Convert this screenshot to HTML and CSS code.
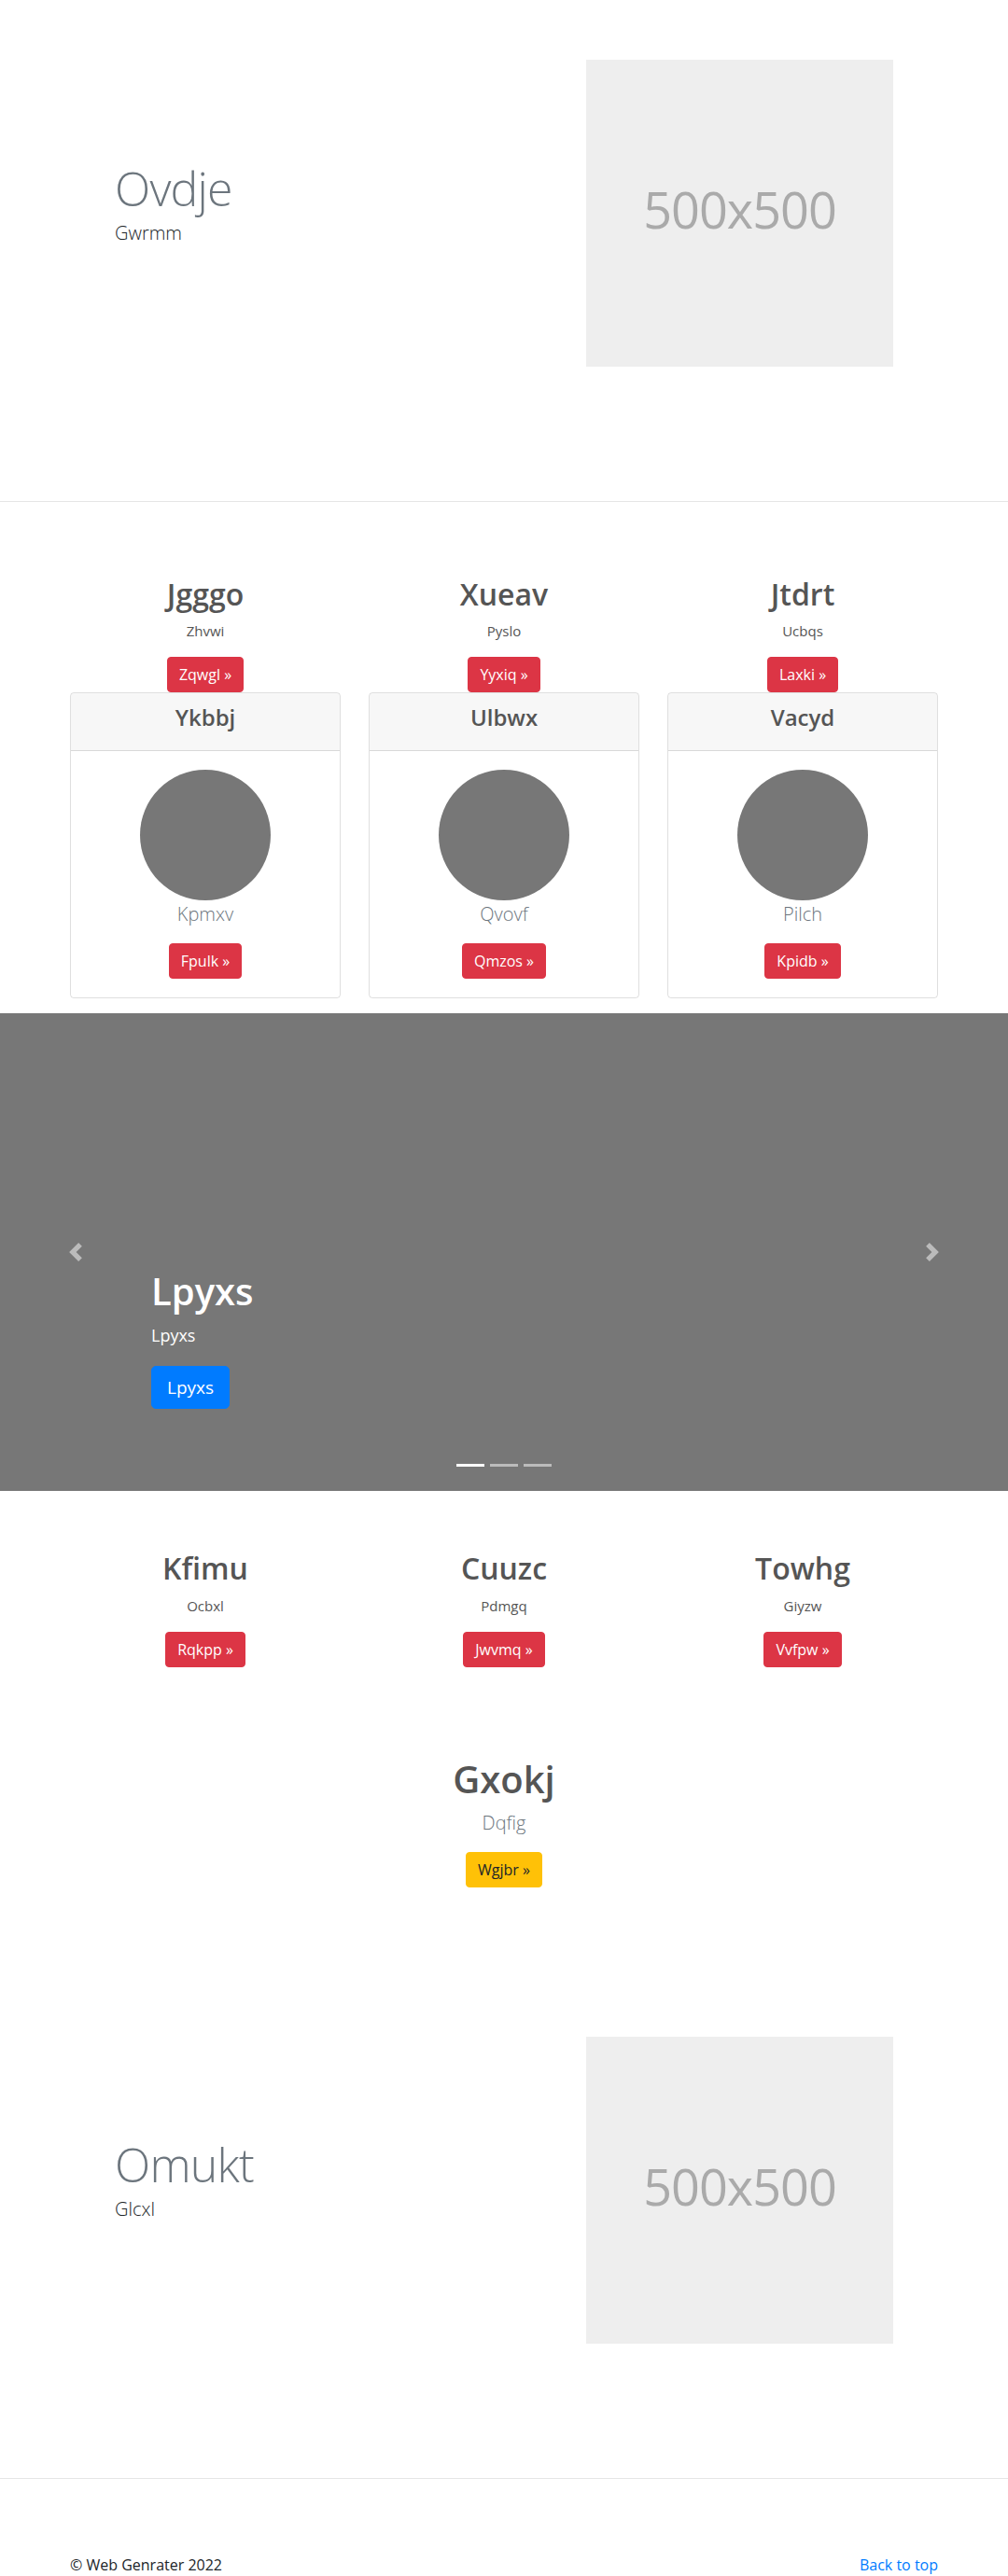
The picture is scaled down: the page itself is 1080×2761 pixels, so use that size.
FILE: index.html
```html
<!DOCTYPE html>
<html lang="en">
<head>
<meta charset="utf-8">
<title>Web Genrater</title>
<link rel="stylesheet" href="styles.css">
</head>
<body>

<section class="featurette">
  <div class="feat-text">
    <h2 class="feat-heading">Ovdje</h2>
    <p class="lead">Gwrmm</p>
  </div>
  <div class="placeholder">500x500</div>
</section>

<hr class="divider">

<section class="marketing marketing-top">
  <div class="col">
    <h2 class="col-title">Jgggo</h2>
    <p class="col-text">Zhvwi</p>
    <a class="btn btn-danger" href="#">Zqwgl &raquo;</a>
    <div class="card">
      <div class="card-header"><h4 class="card-title">Ykbbj</h4></div>
      <div class="card-body">
        <div class="circle"></div>
        <p class="lead muted">Kpmxv</p>
        <a class="btn btn-danger" href="#">Fpulk &raquo;</a>
      </div>
    </div>
  </div>
  <div class="col">
    <h2 class="col-title">Xueav</h2>
    <p class="col-text">Pyslo</p>
    <a class="btn btn-danger" href="#">Yyxiq &raquo;</a>
    <div class="card">
      <div class="card-header"><h4 class="card-title">Ulbwx</h4></div>
      <div class="card-body">
        <div class="circle"></div>
        <p class="lead muted">Qvovf</p>
        <a class="btn btn-danger" href="#">Qmzos &raquo;</a>
      </div>
    </div>
  </div>
  <div class="col">
    <h2 class="col-title">Jtdrt</h2>
    <p class="col-text">Ucbqs</p>
    <a class="btn btn-danger" href="#">Laxki &raquo;</a>
    <div class="card">
      <div class="card-header"><h4 class="card-title">Vacyd</h4></div>
      <div class="card-body">
        <div class="circle"></div>
        <p class="lead muted">Pilch</p>
        <a class="btn btn-danger" href="#">Kpidb &raquo;</a>
      </div>
    </div>
  </div>
</section>

<section class="carousel">
  <a class="control control-prev" href="#">
    <svg width="20" height="20" viewBox="0 0 8 8" aria-hidden="true"><path fill="#fff" d="M5.25 0l-4 4 4 4 1.5-1.5L4.25 4l2.5-2.5L5.25 0z"/></svg>
  </a>
  <a class="control control-next" href="#">
    <svg width="20" height="20" viewBox="0 0 8 8" aria-hidden="true"><path fill="#fff" d="M2.75 0l-1.5 1.5L3.75 4l-2.5 2.5L2.75 8l4-4-4-4z"/></svg>
  </a>
  <div class="caption">
    <h1 class="caption-title">Lpyxs</h1>
    <p class="caption-text">Lpyxs</p>
    <p class="caption-action"><a class="btn btn-lg btn-primary" href="#">Lpyxs</a></p>
  </div>
  <ol class="indicators">
    <li class="active"></li>
    <li></li>
    <li></li>
  </ol>
</section>

<section class="marketing marketing-bottom">
  <div class="col">
    <h2 class="col-title">Kfimu</h2>
    <p class="col-text">Ocbxl</p>
    <a class="btn btn-danger" href="#">Rqkpp &raquo;</a>
  </div>
  <div class="col">
    <h2 class="col-title">Cuuzc</h2>
    <p class="col-text">Pdmgq</p>
    <a class="btn btn-danger" href="#">Jwvmq &raquo;</a>
  </div>
  <div class="col">
    <h2 class="col-title">Towhg</h2>
    <p class="col-text">Giyzw</p>
    <a class="btn btn-danger" href="#">Vvfpw &raquo;</a>
  </div>
</section>

<section class="center-block">
  <h1 class="center-title">Gxokj</h1>
  <p class="lead muted">Dqfig</p>
  <a class="btn btn-warning" href="#">Wgjbr &raquo;</a>
</section>

<section class="featurette">
  <div class="feat-text">
    <h2 class="feat-heading">Omukt</h2>
    <p class="lead">Glcxl</p>
  </div>
  <div class="placeholder">500x500</div>
</section>

<hr class="divider">

<footer class="footer">
  <p class="copy">&copy; Web Genrater 2022</p>
  <p class="top-link"><a href="#">Back to top</a></p>
</footer>

</body>
</html>
```

FILE: styles.css
```css
* { box-sizing: border-box; }

html, body {
  margin: 0;
  padding: 0;
}

body {
  font-family: "Segoe UI", "Open Sans", "Noto Sans", sans-serif;
  font-size: 16px;
  line-height: 1.5;
  color: #212529;
  background: #fff;
}

p { margin: 0 0 16px; }
h1, h2, h4 { margin: 0 0 8px; line-height: 1.2; font-weight: 600; }

a { color: #007bff; text-decoration: none; }

/* ---------- featurette ---------- */
.featurette {
  width: 960px;
  margin: 0 auto;
  padding: 64px 63px;
  display: grid;
  grid-template-columns: 475px 329px;
  column-gap: 30px;
  align-items: center;
}

.feat-heading {
  font-size: 50px;
  font-weight: 300;
  line-height: 1;
  letter-spacing: -0.8px;
  color: #6c757d;
}

.lead {
  font-size: 20px;
  font-weight: 300;
  line-height: 1.5;
}

.muted { color: #6c757d; }

.placeholder {
  width: 329px;
  height: 329px;
  padding-bottom: 8px;
  background: #eee;
  color: #aaa;
  font-size: 54px;
  letter-spacing: -1px;
  display: flex;
  align-items: center;
  justify-content: center;
}

/* ---------- divider ---------- */
.divider {
  margin: 80px 0;
  border: 0;
  border-top: 1px solid rgba(0, 0, 0, 0.1);
  height: 0;
}

/* ---------- marketing ---------- */
.marketing {
  width: 930px;
  margin: 0 auto;
  display: grid;
  grid-template-columns: repeat(3, 1fr);
  column-gap: 30px;
  text-align: center;
  color: #555;
}

.marketing-top { margin-bottom: 16px; }
.marketing-bottom { margin-bottom: 96px; }

.col-title {
  font-size: 32px;
  color: #555;
}

.col-text { color: #555; font-size: 15px; line-height: 24px; }

.btn {
  display: inline-block;
  padding: 6px 12px;
  font-size: 16px;
  line-height: 1.5;
  border: 1px solid transparent;
  border-radius: 4px;
  font-weight: 400;
  vertical-align: middle;
}

.btn-danger { background: #dc3545; border-color: #dc3545; color: #fff; }
.btn-warning { background: #ffc107; border-color: #ffc107; color: #212529; }
.btn-primary { background: #007bff; border-color: #007bff; color: #fff; }

.btn-lg {
  padding: 8px 16px;
  font-size: 19px;
  border-radius: 5px;
}

/* ---------- card ---------- */
.card {
  border: 1px solid rgba(0, 0, 0, 0.125);
  border-radius: 4px;
  text-align: center;
  overflow: hidden;
}

.card-header {
  padding: 12px 20px;
  background: rgba(0, 0, 0, 0.03);
  border-bottom: 1px solid rgba(0, 0, 0, 0.125);
}

.card-title {
  font-size: 24px;
  color: #555;
}

.card-body { padding: 20px; }

.circle {
  width: 140px;
  height: 140px;
  border-radius: 50%;
  background: #777;
  margin: 0 auto;
}

/* ---------- carousel ---------- */
.carousel {
  position: relative;
  height: 512px;
  background: #777;
  margin-bottom: 64px;
}

.control {
  position: absolute;
  top: 0;
  bottom: 0;
  width: 15%;
  display: flex;
  align-items: center;
  justify-content: center;
  opacity: 0.5;
}

.control-prev { left: 0; }
.control-next { right: 0; }

.caption {
  position: absolute;
  left: 15%;
  right: 15%;
  bottom: 52px;
  padding: 20px 0;
  color: #fff;
  text-align: left;
}

.caption-title {
  font-size: 40px;
  margin-bottom: 10px;
  color: #fff;
}

.caption-text { margin-bottom: 20px; font-size: 18px; line-height: 26px; }
.caption-action { margin-bottom: 16px; }

.indicators {
  position: absolute;
  left: 0;
  right: 0;
  bottom: 0;
  margin: 0 0 16px;
  padding: 0;
  list-style: none;
  display: flex;
  justify-content: center;
}

.indicators li {
  width: 30px;
  height: 3px;
  margin: 0 3px;
  box-sizing: content-box;
  border-top: 10px solid transparent;
  border-bottom: 10px solid transparent;
  background: #fff;
  background-clip: padding-box;
  opacity: 0.5;
}

.indicators li.active { opacity: 1; }

/* ---------- center block ---------- */
.center-block {
  text-align: center;
  margin-bottom: 96px;
}

.center-title {
  font-size: 40px;
  color: #555;
}

/* ---------- footer ---------- */
.footer {
  width: 930px;
  margin: 0 auto;
  display: flex;
  justify-content: space-between;
}

.footer p { margin: 0; }
```
